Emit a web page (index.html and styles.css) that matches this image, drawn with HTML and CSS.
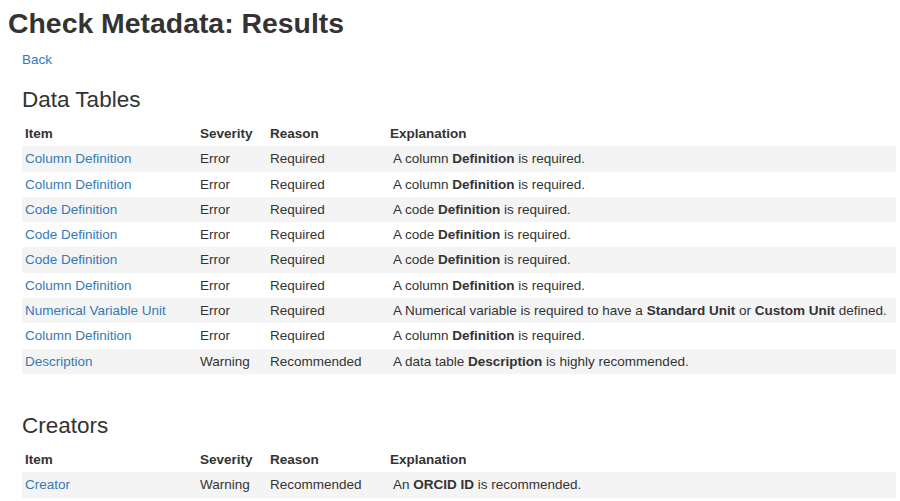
FILE: index.html
```html
<!DOCTYPE html>
<html>
<head>
<meta charset="utf-8">
<link rel="stylesheet" href="styles.css">
</head>
<body>
<h1 class="title">Check Metadata: Results</h1>
<div class="content">
  <a class="back" href="#">Back</a>
  <h3 class="section">Data Tables</h3>
  <table class="results">
    <thead>
      <tr><th class="c-item">Item</th><th class="c-sev">Severity</th><th class="c-reason">Reason</th><th class="c-expl">Explanation</th></tr>
    </thead>
    <tbody>
      <tr><td><a href="#">Column Definition</a></td><td>Error</td><td>Required</td><td class="expl">A column <b>Definition</b> is required.</td></tr>
      <tr><td><a href="#">Column Definition</a></td><td>Error</td><td>Required</td><td class="expl">A column <b>Definition</b> is required.</td></tr>
      <tr><td><a href="#">Code Definition</a></td><td>Error</td><td>Required</td><td class="expl">A code <b>Definition</b> is required.</td></tr>
      <tr><td><a href="#">Code Definition</a></td><td>Error</td><td>Required</td><td class="expl">A code <b>Definition</b> is required.</td></tr>
      <tr><td><a href="#">Code Definition</a></td><td>Error</td><td>Required</td><td class="expl">A code <b>Definition</b> is required.</td></tr>
      <tr><td><a href="#">Column Definition</a></td><td>Error</td><td>Required</td><td class="expl">A column <b>Definition</b> is required.</td></tr>
      <tr><td><a href="#">Numerical Variable Unit</a></td><td>Error</td><td>Required</td><td class="expl">A Numerical variable is required to have a <b>Standard Unit</b> or <b>Custom Unit</b> defined.</td></tr>
      <tr><td><a href="#">Column Definition</a></td><td>Error</td><td>Required</td><td class="expl">A column <b>Definition</b> is required.</td></tr>
      <tr><td><a href="#">Description</a></td><td>Warning</td><td>Recommended</td><td class="expl">A data table <b>Description</b> is highly recommended.</td></tr>
    </tbody>
  </table>
  <h3 class="section creators">Creators</h3>
  <table class="results">
    <thead>
      <tr><th class="c-item">Item</th><th class="c-sev">Severity</th><th class="c-reason">Reason</th><th class="c-expl">Explanation</th></tr>
    </thead>
    <tbody>
      <tr><td><a href="#">Creator</a></td><td>Warning</td><td>Recommended</td><td class="expl">An <b>ORCID ID</b> is recommended.</td></tr>
    </tbody>
  </table>
</div>
</body>
</html>
```

FILE: styles.css
```css
html, body {
  margin: 0;
  padding: 0;
  background: #fff;
}
body {
  font-family: "Liberation Sans", Arial, sans-serif;
  font-size: 13.5px;
  color: #333;
  padding: 0 4px 0 8px;
}
.title {
  font-size: 28.4px;
  font-weight: bold;
  margin: 7px 0 0 0;
  line-height: 32px;
  color: #333;
}
.content {
  padding: 0 0 0 14px;
}
.back {
  display: inline-block;
  margin-top: 11px;
  color: #337ab7;
  text-decoration: none;
  font-size: 13.5px;
  line-height: 19px;
}
.section {
  font-size: 22.5px;
  font-weight: normal;
  margin: 18px 0 8px 0;
  line-height: 26px;
  color: #333;
}
.section.creators {
  margin-top: 39px;
}
.results {
  width: 874px;
  border-collapse: collapse;
  border-spacing: 0;
}
.results th, .results td {
  text-align: left;
  padding: 3px 3px;
  line-height: 19.3px;
  vertical-align: top;
  white-space: nowrap;
}
.results th {
  font-weight: bold;
}
.c-item { width: 169px; }
.c-sev { width: 64px; }
.c-reason { width: 114px; }
.results td.expl { padding-left: 6px; }
.results tbody tr:nth-child(odd) {
  background: #f4f4f4;
}
.results a {
  color: #337ab7;
  text-decoration: none;
}
```
